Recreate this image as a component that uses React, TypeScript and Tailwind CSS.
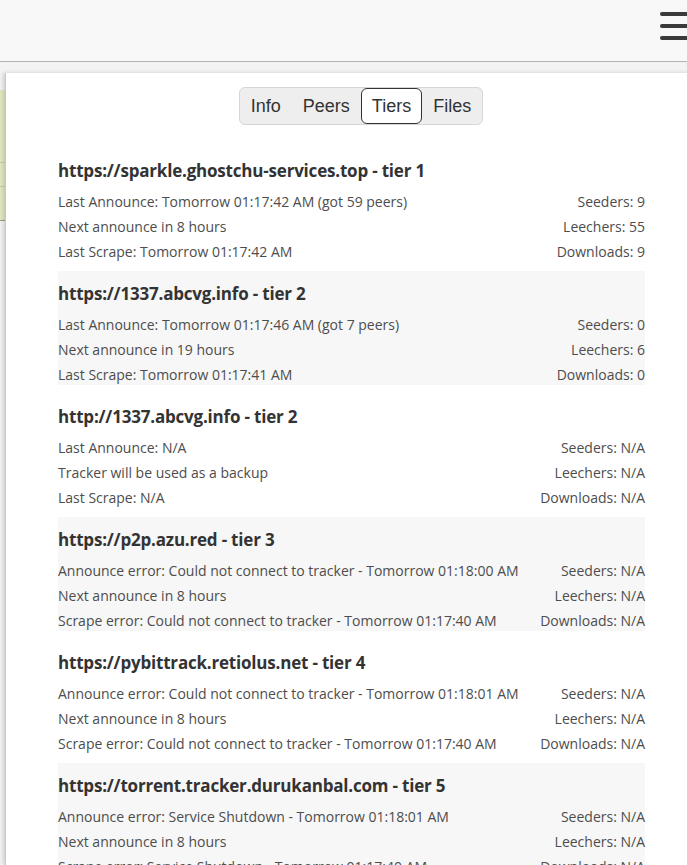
import React, { useState } from 'react';

type Tier = {
    url: string;
    tier: number;
    lines: [string, string][];
};

const TIERS: Tier[] = [
    {
        url: 'https://sparkle.ghostchu-services.top',
        tier: 1,
        lines: [
            ['Last Announce: Tomorrow 01:17:42 AM (got 59 peers)', 'Seeders: 9'],
            ['Next announce in 8 hours', 'Leechers: 55'],
            ['Last Scrape: Tomorrow 01:17:42 AM', 'Downloads: 9'],
        ],
    },
    {
        url: 'https://1337.abcvg.info',
        tier: 2,
        lines: [
            ['Last Announce: Tomorrow 01:17:46 AM (got 7 peers)', 'Seeders: 0'],
            ['Next announce in 19 hours', 'Leechers: 6'],
            ['Last Scrape: Tomorrow 01:17:41 AM', 'Downloads: 0'],
        ],
    },
    {
        url: 'http://1337.abcvg.info',
        tier: 2,
        lines: [
            ['Last Announce: N/A', 'Seeders: N/A'],
            ['Tracker will be used as a backup', 'Leechers: N/A'],
            ['Last Scrape: N/A', 'Downloads: N/A'],
        ],
    },
    {
        url: 'https://p2p.azu.red',
        tier: 3,
        lines: [
            ['Announce error: Could not connect to tracker - Tomorrow 01:18:00 AM', 'Seeders: N/A'],
            ['Next announce in 8 hours', 'Leechers: N/A'],
            ['Scrape error: Could not connect to tracker - Tomorrow 01:17:40 AM', 'Downloads: N/A'],
        ],
    },
    {
        url: 'https://pybittrack.retiolus.net',
        tier: 4,
        lines: [
            ['Announce error: Could not connect to tracker - Tomorrow 01:18:01 AM', 'Seeders: N/A'],
            ['Next announce in 8 hours', 'Leechers: N/A'],
            ['Scrape error: Could not connect to tracker - Tomorrow 01:17:40 AM', 'Downloads: N/A'],
        ],
    },
    {
        url: 'https://torrent.tracker.durukanbal.com',
        tier: 5,
        lines: [
            ['Announce error: Service Shutdown - Tomorrow 01:18:01 AM', 'Seeders: N/A'],
            ['Next announce in 8 hours', 'Leechers: N/A'],
            ['Scrape error: Service Shutdown - Tomorrow 01:17:40 AM', 'Downloads: N/A'],
        ],
    },
];

const TABS = ['Info', 'Peers', 'Tiers', 'Files'];

const App: React.FC = () => {
    const [tab, setTab] = useState('Tiers');

    return (
        <div className="relative w-[687px] h-[865px] overflow-hidden bg-[#f3f3f3]">
            {/* toolbar */}
            <header className="h-[62px] bg-[#f8f8f8] border-b border-[#b4b4b4] flex justify-end items-start pt-[12px]">
                <div className="flex flex-col gap-[8px] w-[30px] mr-[-3px]">
                    <span className="block h-[4px] rounded-full bg-[#3a3a3a]"></span>
                    <span className="block h-[4px] rounded-full bg-[#3a3a3a]"></span>
                    <span className="block h-[4px] rounded-full bg-[#3a3a3a]"></span>
                </div>
            </header>

            {/* torrent list behind the dialog */}
            <div className="pt-[28px] w-[6px]">
                <div className="h-[73px] bg-[#e3e8c3] border-b border-[#c9ceb0]"></div>
                <div className="h-[24px] bg-[#e3e8c3] border-b border-[#c9ceb0]"></div>
                <div className="h-[34px] bg-[#e3e8c3] border-b border-[#9da084]"></div>
            </div>

            {/* inspector dialog */}
            <div className="absolute left-[5px] top-[73px] w-[711px] bottom-0 bg-white border-l border-[#c8c8c8] shadow-[-2px_0_4px_rgba(0,0,0,0.15)] pt-[14px]">
                <div className="flex justify-center">
                    <div className="flex bg-[#eeeeee] border border-[#d6d6d6] rounded-[6px] font-['Liberation_Sans',Arial,sans-serif] text-[18px] text-[#333]">
                        {TABS.map(t => (
                            <button
                                key={t}
                                onClick={() => setTab(t)}
                                className={`h-[36px] px-[10px] rounded-[6px] border leading-[34px] ${t === tab ? 'bg-white border-[#333]' : 'border-transparent'}`}
                            >
                                {t}
                            </button>
                        ))}
                    </div>
                </div>

                <div className="mt-[23px] ml-[52px] w-[587px] flex flex-col gap-[9px] font-['Open_Sans','Noto_Sans',sans-serif]">
                    {TIERS.map((t, i) => (
                        <div key={t.url} className={`pt-[11px] h-[114px] ${i % 2 === 1 ? 'bg-[#f7f7f7]' : ''}`}>
                            <h3 className="text-[17px] tracking-[-0.2px] leading-[24px] font-bold text-[#333]">
                                {t.url} - tier {t.tier}
                            </h3>
                            <div className="mt-[9px] flex flex-col gap-[5px] text-[14px] leading-[20px] text-[#4d4d4d]">
                                {t.lines.map(([left, right]) => (
                                    <div key={left} className="flex justify-between">
                                        <span>{left}</span>
                                        <span>{right}</span>
                                    </div>
                                ))}
                            </div>
                        </div>
                    ))}
                </div>
            </div>
        </div>
    );
};

export default App;
